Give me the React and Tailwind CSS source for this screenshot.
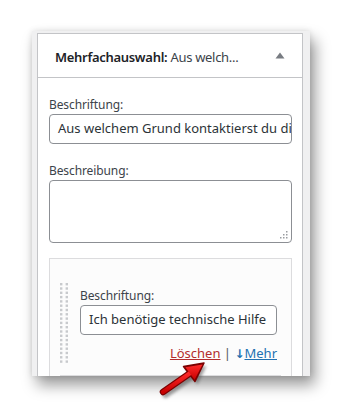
import React from "react";

const font = { fontFamily: "'Noto Sans', 'Open Sans', sans-serif" };

function Dots() {
  const rows = [];
  for (let i = 0; i < 19; i++) {
    rows.push(<rect key={"a" + i} x="0" y={i * 4.3} width="2.4" height="2.4" fill="#c8cacd" />);
    rows.push(<rect key={"b" + i} x="5.6" y={i * 4.3} width="2.4" height="2.4" fill="#c8cacd" />);
  }
  return (
    <svg width="9" height="82" viewBox="0 0 9 82" className="block">
      {rows}
    </svg>
  );
}

function Arrow() {
  return (
    <svg
      className="absolute left-[150px] top-[354px]"
      width="70"
      height="52"
      viewBox="0 0 70 52"
    >
      <defs>
        <filter id="blur" x="-50%" y="-50%" width="200%" height="200%">
          <feGaussianBlur stdDeviation="1.6" />
        </filter>
        <linearGradient id="rg" x1="0" y1="0" x2="0" y2="1">
          <stop offset="0" stopColor="#ff2a2a" />
          <stop offset="1" stopColor="#c80000" />
        </linearGradient>
      </defs>
      <g filter="url(#blur)" opacity="0.55" transform="translate(2.5,3)">
        <line x1="13" y1="38" x2="41" y2="18.5" stroke="#555" strokeWidth="6" strokeLinecap="round" />
        <polygon points="54,9 45,27.5 33.5,12.5" fill="#555" />
      </g>
      <line x1="13" y1="38" x2="41" y2="18.5" stroke="#7a0000" strokeWidth="6.5" strokeLinecap="round" />
      <polygon points="54,9 45,27.5 33.5,12.5" fill="#7a0000" stroke="#7a0000" strokeWidth="1.5" strokeLinejoin="round" />
      <line x1="13" y1="38" x2="41" y2="18.5" stroke="url(#rg)" strokeWidth="4.2" strokeLinecap="round" />
      <polygon points="52.5,10.5 44.6,25.7 35.3,13.3" fill="url(#rg)" />
    </svg>
  );
}

export default function App() {
  return (
    <div className="relative w-[342px] h-[408px] bg-white overflow-hidden" style={font}>
      <div className="ml-[32px] mt-[31px] w-[278px] h-[345px] bg-[#f0f0f1] pt-[2px] pl-[5px] pr-[7px] overflow-hidden shadow-[5px_9px_14px_rgba(0,0,0,0.4),0_0_6px_rgba(0,0,0,0.12)]">
        <div className="h-full bg-white border border-b-0 border-[#c3c4c7] flex flex-col">
          <div className="h-[44px] shrink-0 border-b border-[#c3c4c7] flex items-center justify-between pl-[17px] pr-[17px]">
            <div className="text-[13px] leading-[20px] text-[#1d2327] whitespace-nowrap tracking-[-0.3px] pt-[2px]">
              <span className="font-semibold">Mehrfachauswahl:</span>
              <span className="text-[#3c434a]"> Aus welch...</span>
            </div>
            <svg width="10" height="7" viewBox="0 0 10 7">
              <polygon points="5,0.5 9.5,6.5 0.5,6.5" fill="#787c82" />
            </svg>
          </div>
          <div className="pl-[11px] pr-[10px] pt-[16px]">
            <div className="text-[12px] leading-[19px] text-[#3c434a] tracking-[-0.1px] pt-[1px]">Beschriftung:</div>
            <div className="h-[30px] border border-[#8c8f94] rounded-[4px] pl-[8px] flex items-center overflow-hidden whitespace-nowrap text-[13px] text-[#2c3338]">
              Aus welchem Grund kontaktierst du dich
            </div>
            <div className="mt-[16px] text-[12px] leading-[19px] text-[#3c434a] tracking-[-0.1px] pt-[1px]">Beschreibung:</div>
            <div className="relative h-[63px] border border-[#8c8f94] rounded-[4px]">
              <svg className="absolute right-[3px] bottom-[3px]" width="8" height="8" viewBox="0 0 8 8">
                <rect x="6" y="0" width="1.5" height="1.5" fill="#9a9da1" />
                <rect x="3" y="3" width="1.5" height="1.5" fill="#9a9da1" />
                <rect x="6" y="3" width="1.5" height="1.5" fill="#9a9da1" />
                <rect x="0" y="6" width="1.5" height="1.5" fill="#9a9da1" />
                <rect x="3" y="6" width="1.5" height="1.5" fill="#9a9da1" />
                <rect x="6" y="6" width="1.5" height="1.5" fill="#9a9da1" />
              </svg>
            </div>
            <div className="mt-[15px] w-[243px] h-[140px] border border-b-0 border-[#dcdcde] bg-[#fcfcfc] flex">
              <div className="ml-[10px] mt-[24px]">
                <Dots />
              </div>
              <div className="ml-[11px] w-[197px] pt-[27px] flex flex-col">
                <div className="text-[12px] leading-[19px] text-[#3c434a] tracking-[-0.1px]">Beschriftung:</div>
                <div className="h-[30px] border border-[#8c8f94] rounded-[4px] pl-[8px] flex items-center overflow-hidden whitespace-nowrap text-[13px] text-[#2c3338] bg-white">
                  Ich benötige technische Hilfe
                </div>
                <div className="mt-[9px] text-[13px] leading-[19px] text-right whitespace-nowrap">
                  <span className="text-[#b32d2e] underline">Löschen</span>
                  <span className="text-[#50575e]"> | </span>
                  <span className="text-[#2271b1] font-['DejaVu_Sans'] text-[12px] font-bold">↓</span>
                  <span className="text-[#2271b1] underline">Mehr</span>
                </div>
                <div className="mt-[11px] -ml-[20px] w-[221px] h-px bg-[#dcdcde]" />
              </div>
            </div>
          </div>
        </div>
      </div>
      <Arrow />
    </div>
  );
}
